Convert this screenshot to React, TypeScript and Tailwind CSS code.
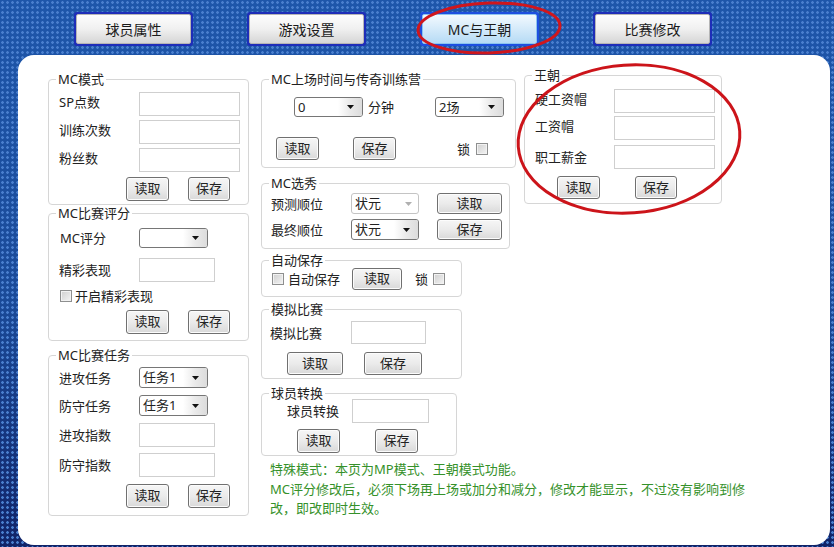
import React from "react";

const FONT = "font-['Noto_Sans','Noto_Sans_CJK_SC',sans-serif]";

function Tab({ label, active }: { label: string; active?: boolean }) {
  return active ? (
    <div className="w-[119px] h-[34px] rounded-[3px] bg-[#1d4fe0] p-[2px]">
      <div className="w-full h-full rounded-[2px] border border-[#8cc4ee] bg-linear-to-b from-[#f2f9fe] to-[#b6dbf5] flex items-center justify-center text-[14px] text-[#1a1a1a]">
        {label}
      </div>
    </div>
  ) : (
    <div className="w-[119px] h-[34px] rounded-[3px] bg-[#1e2db8] p-[2px]">
      <div className="w-full h-full rounded-[2px] border border-[#b5b5b5] bg-linear-to-b from-[#fdfdfd] via-[#f0f0f0] to-[#d6d6d6] flex items-center justify-center text-[14px] text-[#1a1a1a]">
        {label}
      </div>
    </div>
  );
}

function Group({
  legend,
  className,
  children,
}: {
  legend: string;
  className: string;
  children?: React.ReactNode;
}) {
  return (
    <fieldset className={`border border-[#d6d6d6] rounded-[4px] flex flex-col shrink-0 ${className}`}>
      <legend className="ml-[7px] px-[2px] text-[13px] leading-[16px] text-[#222]">{legend}</legend>
      {children}
    </fieldset>
  );
}

function Btn({ className, children }: { className: string; children: React.ReactNode }) {
  return (
    <div
      className={`shrink-0 rounded-[3px] border border-[#707070] bg-linear-to-b from-[#f6f6f6] via-[#ebebeb] to-[#d9d9d9] flex items-center justify-center text-[13px] text-[#222] shadow-[inset_0_0_0_1px_#fcfcfc] ${className}`}
    >
      {children}
    </div>
  );
}

function Input({ className }: { className: string }) {
  return <div className={`shrink-0 border border-[#cfcfcf] bg-white ${className}`} />;
}

function Arrow({ color }: { color: string }) {
  return (
    <svg width="7" height="4" viewBox="0 0 7 4">
      <polygon points="0,0 7,0 3.5,4" fill={color} />
    </svg>
  );
}

function Select({
  className,
  value,
  disabled,
}: {
  className: string;
  value?: string;
  disabled?: boolean;
}) {
  if (disabled) {
    return (
      <div className={`shrink-0 flex items-stretch rounded-[3px] border border-[#c4c4c4] bg-white ${className}`}>
        <span className="flex-1 pl-[3px] flex items-center text-[13px] leading-none text-[#222]">{value}</span>
        <span className="w-[20px] flex items-center justify-center">
          <Arrow color="#b0b0b0" />
        </span>
      </div>
    );
  }
  return (
    <div className={`shrink-0 flex items-stretch rounded-[3px] border border-[#767676] bg-white overflow-hidden ${className}`}>
      <span className="flex-1 pl-[3px] flex items-center text-[13px] leading-none text-[#222]">{value}</span>
      <span className="w-[24px] flex items-center justify-center bg-linear-to-r from-[#ffffff] via-[#eaeaea] to-[#dcdcdc]">
        <Arrow color="#111" />
      </span>
    </div>
  );
}

function Check() {
  return (
    <div className="shrink-0 w-[12px] h-[12px] border border-[#8e8f8f] bg-linear-to-br from-[#cfcfcf] to-[#f4f4f4] shadow-[inset_0_0_0_1px_#f2f2f2]" />
  );
}

function Label({ className, children }: { className: string; children: React.ReactNode }) {
  return <span className={`shrink-0 text-[13px] leading-[16px] text-[#222] ${className}`}>{children}</span>;
}

export default function App() {
  return (
    <div
      className={`relative w-[834px] h-[547px] overflow-hidden ${FONT} bg-[radial-gradient(circle,#4a7fce_1px,transparent_1.6px),linear-gradient(to_bottom,#1e56aa_0%,#1a4a98_55%,#112468_100%)] bg-size-[5px_5px,100%_100%]`}
    >
      {/* Tabs */}
      <div className="flex pl-[74px] pt-[12px] gap-[54px]">
        <Tab label="球员属性" />
        <Tab label="游戏设置" />
        <Tab label="MC与王朝" active />
        <Tab label="比赛修改" />
      </div>

      {/* White panel */}
      <div className="ml-[18px] mt-[9px] w-[812px] h-[490px] rounded-[16px] bg-white flex items-start pt-[12px] pl-[30px]">
        {/* Column 1 */}
        <div className="mt-[4px] w-[201px] flex flex-col">
          <Group legend="MC模式" className="w-[201px] h-[134px]">
            <div className="mt-[5px] h-[24px] flex items-center">
              <Label className="w-[90px] pl-[10px] -translate-y-[2px]">SP点数</Label>
              <Input className="w-[101px] h-[24px]" />
            </div>
            <div className="mt-[4px] h-[24px] flex items-center">
              <Label className="w-[90px] pl-[10px] -translate-y-[2px]">训练次数</Label>
              <Input className="w-[101px] h-[24px]" />
            </div>
            <div className="mt-[4px] h-[24px] flex items-center">
              <Label className="w-[90px] pl-[10px] -translate-y-[2px]">粉丝数</Label>
              <Input className="w-[101px] h-[24px]" />
            </div>
            <div className="mt-[5px] flex items-center pl-[77px]">
              <Btn className="w-[43px] h-[24px]">读取</Btn>
              <Btn className="ml-[19px] w-[42px] h-[24px]">保存</Btn>
            </div>
          </Group>

          <Group legend="MC比赛评分" className="w-[201px] h-[136px]">
            <div className="mt-[7px] h-[20px] flex items-center">
              <Label className="w-[90px] pl-[11px]">MC评分</Label>
              <Select className="w-[69px] h-[20px]" />
            </div>
            <div className="mt-[10px] h-[24px] flex items-center">
              <Label className="w-[90px] pl-[10px]">精彩表现</Label>
              <Input className="w-[76px] h-[24px]" />
            </div>
            <div className="mt-[6px] h-[16px] flex items-center pl-[11px]">
              <Check />
              <Label className="ml-[3px]">开启精彩表现</Label>
            </div>
            <div className="mt-[6px] flex items-center pl-[77px]">
              <Btn className="w-[43px] h-[24px]">读取</Btn>
              <Btn className="ml-[19px] w-[42px] h-[24px]">保存</Btn>
            </div>
          </Group>

          <Group legend="MC比赛任务" className="mt-[6px] w-[201px] h-[169px]">
            <div className="mt-[4px] h-[21px] flex items-center">
              <Label className="w-[90px] pl-[10px]">进攻任务</Label>
              <Select className="w-[69px] h-[21px]" value="任务1" />
            </div>
            <div className="mt-[7px] h-[21px] flex items-center">
              <Label className="w-[90px] pl-[10px]">防守任务</Label>
              <Select className="w-[69px] h-[21px]" value="任务1" />
            </div>
            <div className="mt-[7px] h-[24px] flex items-center">
              <Label className="w-[90px] pl-[10px]">进攻指数</Label>
              <Input className="w-[76px] h-[24px]" />
            </div>
            <div className="mt-[6px] h-[24px] flex items-center">
              <Label className="w-[90px] pl-[10px]">防守指数</Label>
              <Input className="w-[76px] h-[24px]" />
            </div>
            <div className="mt-[7px] flex items-center pl-[77px]">
              <Btn className="w-[43px] h-[24px]">读取</Btn>
              <Btn className="ml-[19px] w-[42px] h-[24px]">保存</Btn>
            </div>
          </Group>
        </div>

        {/* Column 2 */}
        <div className="ml-[12px] mt-[4px] w-[255px] flex flex-col items-start">
          <Group legend="MC上场时间与传奇训练营" className="w-[255px] h-[97px]">
            <div className="mt-[10px] h-[20px] flex items-center pl-[32px]">
              <Select className="w-[69px] h-[20px]" value="0" />
              <Label className="ml-[5px] w-[67px]">分钟</Label>
              <Select className="w-[69px] h-[20px]" value="2场" />
            </div>
            <div className="mt-[20px] h-[23px] flex items-center pl-[14px]">
              <Btn className="w-[43px] h-[23px]">读取</Btn>
              <Btn className="ml-[34px] w-[43px] h-[23px]">保存</Btn>
              <Label className="ml-[61px]">锁</Label>
              <div className="ml-[6px]">
                <Check />
              </div>
            </div>
          </Group>

          <Group legend="MC选秀" className="mt-[7px] w-[249px] h-[74px]">
            <div className="mt-[2px] h-[21px] flex items-center">
              <Label className="w-[89px] pl-[9px]">预测顺位</Label>
              <Select className="w-[68px] h-[21px]" value="状元" disabled />
              <Btn className="ml-[18px] w-[65px] h-[21px]">读取</Btn>
            </div>
            <div className="mt-[5px] h-[21px] flex items-center">
              <Label className="w-[89px] pl-[9px]">最终顺位</Label>
              <Select className="w-[68px] h-[21px]" value="状元" />
              <Btn className="ml-[18px] w-[65px] h-[21px]">保存</Btn>
            </div>
          </Group>

          <Group legend="自动保存" className="mt-[3px] w-[201px] h-[45px]">
            <div className="h-[22px] flex items-center pl-[10px]">
              <Check />
              <Label className="ml-[4px]">自动保存</Label>
              <Btn className="ml-[12px] w-[50px] h-[22px]">读取</Btn>
              <Label className="ml-[13px]">锁</Label>
              <div className="ml-[5px]">
                <Check />
              </div>
            </div>
          </Group>

          <Group legend="模拟比赛" className="mt-[4px] w-[201px] h-[78px]">
            <div className="mt-[4px] h-[23px] flex items-center">
              <Label className="w-[89px] pl-[8px]">模拟比赛</Label>
              <Input className="w-[75px] h-[23px]" />
            </div>
            <div className="mt-[8px] flex items-center pl-[25px]">
              <Btn className="w-[56px] h-[23px]">读取</Btn>
              <Btn className="ml-[21px] w-[58px] h-[23px]">保存</Btn>
            </div>
          </Group>

          <Group legend="球员转换" className="mt-[6px] w-[196px] h-[71px]">
            <div className="-mt-[2px] h-[24px] flex items-center">
              <Label className="w-[90px] pl-[25px]">球员转换</Label>
              <Input className="w-[77px] h-[24px]" />
            </div>
            <div className="mt-[6px] flex items-center pl-[35px]">
              <Btn className="w-[43px] h-[24px]">读取</Btn>
              <Btn className="ml-[35px] w-[43px] h-[24px]">保存</Btn>
            </div>
          </Group>

          <div className="mt-[4px] pl-[9px] w-[490px] text-[13px] leading-[19.5px] text-[#35912a]">
            特殊模式：本页为MP模式、王朝模式功能。
            <br />
            MC评分修改后，必须下场再上场或加分和减分，修改才能显示，不过没有影响到修
            <br />
            改，即改即时生效。
          </div>
        </div>

        {/* Column 3 */}
        <div className="ml-[8px] w-[198px] flex flex-col">
          <Group legend="王朝" className="w-[198px] h-[137px]">
            <div className="mt-[6px] h-[24px] flex items-center">
              <Label className="w-[89px] pl-[10px] -translate-y-[2px]">硬工资帽</Label>
              <Input className="w-[101px] h-[24px]" />
            </div>
            <div className="mt-[3px] h-[24px] flex items-center">
              <Label className="w-[89px] pl-[10px] -translate-y-[2px]">工资帽</Label>
              <Input className="w-[101px] h-[24px]" />
            </div>
            <div className="mt-[5px] h-[24px] flex items-center">
              <Label className="w-[89px] pl-[10px]">职工薪金</Label>
              <Input className="w-[101px] h-[24px]" />
            </div>
            <div className="mt-[7px] flex items-center pl-[32px]">
              <Btn className="w-[43px] h-[23px]">读取</Btn>
              <Btn className="ml-[35px] w-[42px] h-[23px]">保存</Btn>
            </div>
          </Group>
        </div>
      </div>

      {/* Red hand-drawn ellipses */}
      <svg className="absolute inset-0 pointer-events-none" width="834" height="547" viewBox="0 0 834 547">
        <ellipse cx="489" cy="28" rx="71" ry="25" fill="none" stroke="#d0161c" strokeWidth="3" transform="rotate(-2 489 28)" />
        <ellipse cx="629" cy="139" rx="111" ry="74" fill="none" stroke="#cc141a" strokeWidth="3" transform="rotate(-4 629 139)" />
      </svg>
    </div>
  );
}
